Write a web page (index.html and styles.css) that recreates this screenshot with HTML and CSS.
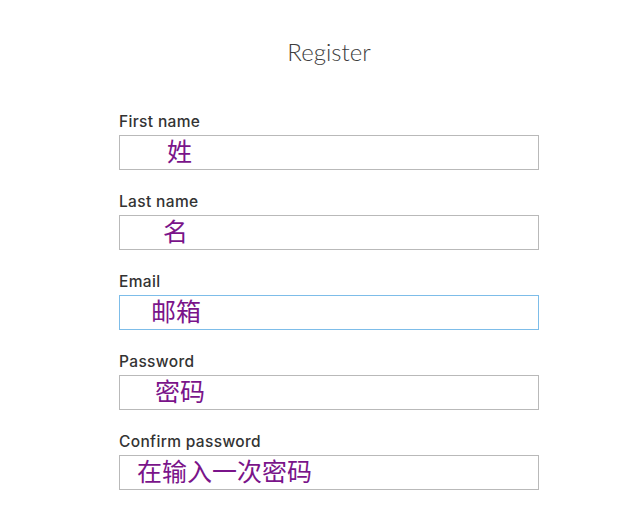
FILE: index.html
```html
<!DOCTYPE html>
<html lang="zh">
<head>
<meta charset="utf-8">
<title>Register</title>
<link rel="stylesheet" href="styles.css">
</head>
<body>
<main class="page">
  <h1 class="title">Register</h1>
  <form class="form">
    <div class="field">
      <label class="label">First name</label>
      <div class="input input-first"><span class="value">姓</span></div>
    </div>
    <div class="field">
      <label class="label">Last name</label>
      <div class="input input-last"><span class="value">名</span></div>
    </div>
    <div class="field">
      <label class="label">Email</label>
      <div class="input input-email focused"><span class="value">邮箱</span></div>
    </div>
    <div class="field">
      <label class="label">Password</label>
      <div class="input input-pass"><span class="value">密码</span></div>
    </div>
    <div class="field">
      <label class="label">Confirm password</label>
      <div class="input input-confirm"><span class="value">在输入一次密码</span></div>
    </div>
  </form>
</main>
</body>
</html>
```
FILE: styles.css
```css
* { box-sizing: border-box; }
html, body { margin: 0; padding: 0; background: #fff; }
body { font-family: Inter, "Open Sans", "Noto Sans CJK SC", sans-serif; color: #333; }
.page { width: 420px; margin-left: 119px; padding-top: 37px; }
.title {
  margin: 0 0 48px;
  text-align: center;
  font-family: Lato, "Open Sans", sans-serif;
  font-weight: 300;
  font-size: 24px;
  line-height: 30px;
  color: #3d3d3d;
}
.form { display: flex; flex-direction: column; gap: 25px; }
.field { display: flex; flex-direction: column; }
.label {
  font-size: 15.5px;
  font-weight: 500;
  letter-spacing: 0.35px;
  line-height: 14px;
  margin-bottom: 6px;
  color: #333;
}
.input {
  height: 35px;
  border: 1px solid #b9b9b9;
  display: flex;
  align-items: center;
}
.input.focused { border-color: #7dbde9; }
.value {
  font-family: "Noto Sans CJK SC", sans-serif;
  font-size: 25px;
  line-height: 26px;
  color: #7a148a;
  margin-top: -5px;
}
.input-first { padding-left: 47px; }
.input-last { padding-left: 43px; }
.input-email { padding-left: 31px; }
.input-pass { padding-left: 35px; }
.input-confirm { padding-left: 17px; }
```
